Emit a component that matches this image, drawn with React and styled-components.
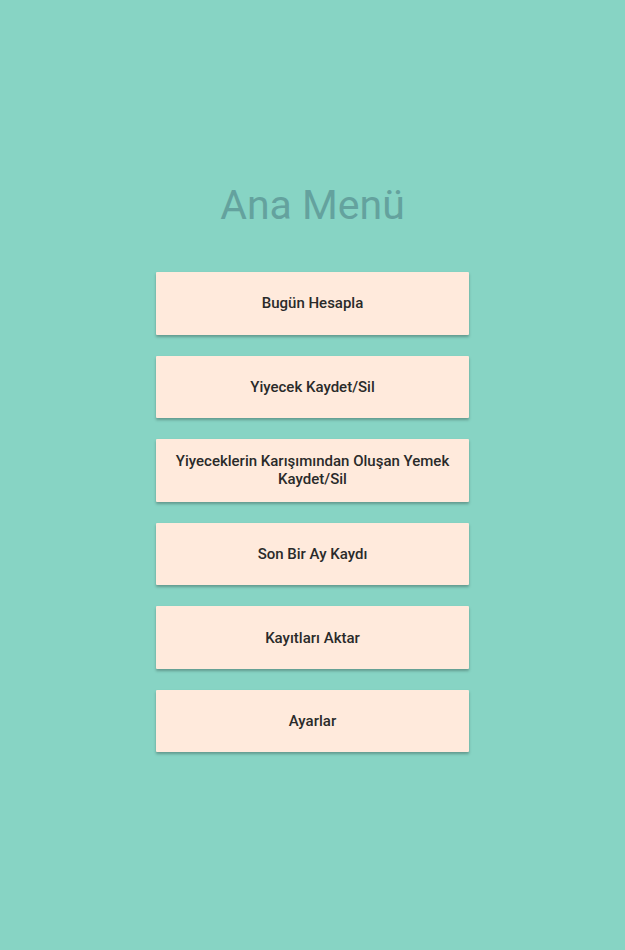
import styled, { createGlobalStyle } from "styled-components";

const GlobalStyle = createGlobalStyle`
  html, body {
    margin: 0;
    padding: 0;
    background: #87d4c4;
  }
  body {
    font-family: Roboto, "Noto Sans", sans-serif;
  }
`;

const Screen = styled.div`
  width: 625px;
  height: 950px;
  background: #87d4c4;
  display: flex;
  flex-direction: column;
  align-items: center;
  padding-top: 181px;
  box-sizing: border-box;
`;

const Title = styled.h1`
  margin: 0 0 43px;
  font-size: 41px;
  line-height: 48px;
  font-weight: 400;
  color: #64a29e;
`;

const MenuList = styled.div`
  display: flex;
  flex-direction: column;
  gap: 21.1px;
`;

const MenuButton = styled.button`
  width: 313px;
  height: 62.5px;
  border: none;
  border-radius: 1px;
  background: #ffeadc;
  box-shadow: 0 2px 3px rgba(0, 0, 0, 0.28);
  font-family: Roboto, "Noto Sans", sans-serif;
  font-size: 15px;
  font-weight: 500;
  line-height: 18px;
  color: #2a2a2a;
  padding: 0 16px;
  display: flex;
  align-items: center;
  justify-content: center;
  text-align: center;
  cursor: pointer;
`;

const items = [
  "Bugün Hesapla",
  "Yiyecek Kaydet/Sil",
  "Yiyeceklerin Karışımından Oluşan Yemek Kaydet/Sil",
  "Son Bir Ay Kaydı",
  "Kayıtları Aktar",
  "Ayarlar",
];

const App = () => {
  return (
    <>
      <GlobalStyle />
      <Screen>
        <Title>Ana Menü</Title>
        <MenuList>
          {items.map((label) => (
            <MenuButton key={label}>{label}</MenuButton>
          ))}
        </MenuList>
      </Screen>
    </>
  );
};

export default App;
